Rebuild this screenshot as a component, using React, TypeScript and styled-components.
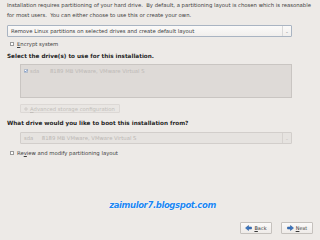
import React from "react";
import styled, { createGlobalStyle } from "styled-components";

const Global = createGlobalStyle`
  html, body { margin: 0; padding: 0; background: #edeae7; }
  body { font-family: "DejaVu Sans", "Liberation Sans", sans-serif; }
`;

const Page = styled.div`
  width: 320px;
  height: 240px;
  box-sizing: border-box;
  padding: 0 7px;
  display: flex;
  flex-direction: column;
  background: #edeae7;
  color: #3a3a3a;
  font-size: 5.3px;
  overflow: hidden;
`;

const Intro = styled.p`
  margin: 0;
  line-height: 10px;
  white-space: nowrap;
  color: #404040;
`;

const Combo = styled.div<{ $disabled?: boolean; $indent?: number; $top: number }>`
  margin-top: ${(p) => p.$top}px;
  margin-left: ${(p) => p.$indent || 0}px;
  width: ${(p) => 285 - (p.$indent || 0)}px;
  height: 12px;
  box-sizing: border-box;
  display: flex;
  align-items: center;
  border: 1px solid ${(p) => (p.$disabled ? "#d2cecb" : "#a9b4c2")};
  border-radius: 1px;
  background: ${(p) => (p.$disabled ? "#e6e3e0" : "linear-gradient(#fbfaf9, #f1efed)")};
  color: ${(p) => (p.$disabled ? "#bbb7b4" : "#3a3a3a")};
`;

const ComboText = styled.span`
  flex: 1;
  padding-left: 3px;
  white-space: nowrap;
`;

const ComboArrow = styled.span<{ $disabled?: boolean }>`
  width: 9px;
  height: 100%;
  box-sizing: border-box;
  border-left: 1px solid ${(p) => (p.$disabled ? "#d6d2cf" : "#d9d9d9")};
  display: flex;
  align-items: center;
  justify-content: center;
  color: ${(p) => (p.$disabled ? "#c4c0bd" : "#8a8a8a")};
  font-size: 4px;
`;

const CheckRow = styled.label<{ $top: number }>`
  margin-top: ${(p) => p.$top}px;
  margin-left: 3px;
  height: 8px;
  display: flex;
  align-items: center;
  gap: 3px;
  white-space: nowrap;
  color: #3e3e3e;
`;

const Box = styled.span<{ $disabled?: boolean }>`
  width: 4px;
  height: 4px;
  box-sizing: border-box;
  border: 1px solid ${(p) => (p.$disabled ? "#b7bfcb" : "#9a9a9a")};
  background: #fff;
  position: relative;
  display: inline-block;
  flex: none;
`;

const Title = styled.div<{ $top: number }>`
  margin-top: ${(p) => p.$top}px;
  height: 9px;
  line-height: 9px;
  font-weight: bold;
  font-size: 5.7px;
  color: #1e1e1e;
  white-space: nowrap;
`;

const DriveList = styled.div`
  margin-top: 3px;
  margin-left: 13px;
  width: 272px;
  height: 34px;
  box-sizing: border-box;
  border: 1px solid #c9c5c2;
  background: #dedad7;
  padding: 3px 3px;
`;

const DriveRow = styled.div`
  display: flex;
  align-items: center;
  height: 5px;
  color: #bdb9b6;
  white-space: nowrap;
`;

const Cell = styled.span<{ $w: number }>`
  width: ${(p) => p.$w}px;
  flex: none;
`;

const AdvButton = styled.div`
  margin-top: 6px;
  margin-left: 13px;
  width: 100px;
  height: 9px;
  box-sizing: border-box;
  border: 1px solid #dcd8d5;
  border-radius: 1px;
  background: #e9e6e3;
  display: flex;
  align-items: center;
  gap: 2px;
  padding-left: 3px;
  color: #c2beba;
  white-space: nowrap;
`;

const Spacer = styled.div`
  flex: 1;
`;

const Watermark = styled.div`
  align-self: center;
  margin-left: 5px;
  font-family: "DejaVu Sans", sans-serif;
  font-weight: bold;
  font-style: italic;
  font-size: 8.5px;
  letter-spacing: -0.4px;
  color: #1c86f0;
  text-shadow: 0 0 1px #fff, 0 0 1px #fff, 0 0 1px #fff;
  line-height: 10px;
`;

const Footer = styled.div`
  display: flex;
  justify-content: flex-end;
  gap: 9px;
  margin-top: 12px;
  margin-bottom: 6px;
`;

const NavButton = styled.div`
  width: 32px;
  height: 12px;
  box-sizing: border-box;
  border: 1px solid #c5c1bd;
  border-radius: 1px;
  background: linear-gradient(#fbfaf9, #eeebe8);
  display: flex;
  align-items: center;
  justify-content: center;
  gap: 2px;
  color: #3a3a3a;
  font-size: 5px;
`;

const U = styled.span`
  text-decoration: underline;
`;

const Arrow = ({ dir }: { dir: "left" | "right" }) => (
  <svg width="7" height="6" viewBox="0 0 14 12">
    <g transform={dir === "left" ? "" : "translate(14 0) scale(-1 1)"}>
      <path d="M1 6 L7 1 L7 4 L13 4 L13 8 L7 8 L7 11 Z" fill="#3b76c2" stroke="#20508f" strokeWidth="1" />
    </g>
  </svg>
);

const Check = () => (
  <svg width="4" height="4" viewBox="0 0 8 8" style={{ position: "absolute", left: -1, top: -1 }}>
    <path d="M1.5 4 L3.3 6 L7 1.5" fill="none" stroke="#4a73b3" strokeWidth="1.4" />
  </svg>
);

const AdvIcon = () => (
  <svg width="4" height="4" viewBox="0 0 8 8">
    <path d="M4 0 V8 M0 4 H8" stroke="#cfcbc8" strokeWidth="2" />
  </svg>
);

export default function App() {
  return (
    <>
      <Global />
      <Page>
        <Intro>
          Installation requires partitioning of your hard drive.&nbsp; By default, a partitioning layout is chosen which is reasonable
          <br />
          for most users.&nbsp; You can either choose to use this or create your own.
        </Intro>
        <Combo $top={5}>
          <ComboText>Remove Linux partitions on selected drives and create default layout</ComboText>
          <ComboArrow>⌄</ComboArrow>
        </Combo>
        <CheckRow $top={3}>
          <Box />
          <span>
            <U>E</U>ncrypt system
          </span>
        </CheckRow>
        <Title $top={4}>Select the drive(s) to use for this installation.</Title>
        <DriveList>
          <DriveRow>
            <Cell $w={6}>
              <Box $disabled>
                <Check />
              </Box>
            </Cell>
            <Cell $w={20}>sda</Cell>
            <Cell $w={25}>8189 MB</Cell>
            <span>VMware, VMware Virtual S</span>
          </DriveRow>
        </DriveList>
        <AdvButton>
          <AdvIcon />
          <span>
            <U>A</U>dvanced storage configuration
          </span>
        </AdvButton>
        <Title $top={6}>What drive would you like to boot this installation from?</Title>
        <Combo $top={4} $indent={13} $disabled>
          <ComboText>sda&nbsp;&nbsp;&nbsp;&nbsp; 8189 MB VMware, VMware Virtual S</ComboText>
          <ComboArrow $disabled>⌄</ComboArrow>
        </Combo>
        <CheckRow $top={5}>
          <Box />
          <span>
            Re<U>v</U>iew and modify partitioning layout
          </span>
        </CheckRow>
        <Spacer />
        <Watermark>zaimulor7.blogspot.com</Watermark>
        <Footer>
          <NavButton>
            <Arrow dir="left" />
            <span>
              <U>B</U>ack
            </span>
          </NavButton>
          <NavButton>
            <Arrow dir="right" />
            <span>
              <U>N</U>ext
            </span>
          </NavButton>
        </Footer>
      </Page>
    </>
  );
}
